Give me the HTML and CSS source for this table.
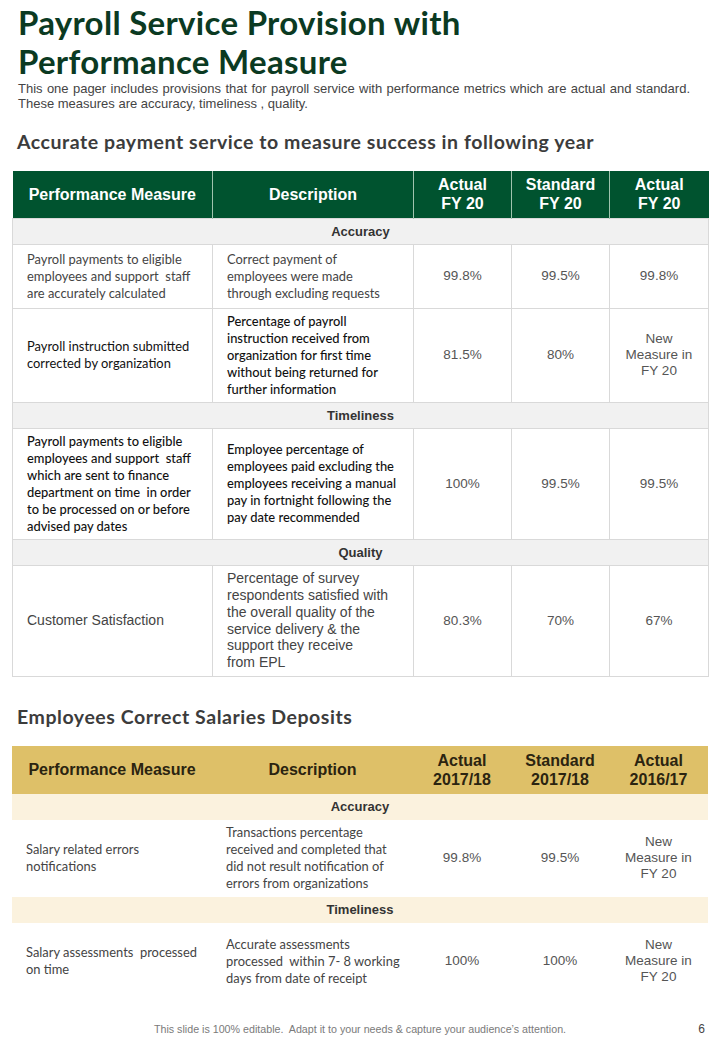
FILE: index.html
```html
<!DOCTYPE html>
<html>
<head>
<meta charset="utf-8">
<link rel="stylesheet" href="styles.css">
</head>
<body>
<div class="page">
  <h1 class="title">Payroll Service Provision with<br>Performance Measure</h1>
  <p class="intro"><span class="intro-l1">This one pager includes provisions that for payroll service with performance metrics which are actual and standard.</span><span class="intro-l2">These measures are accuracy, timeliness , quality.</span></p>

  <h2 class="heading h-first">Accurate payment service to measure success in following year</h2>
  <table class="grid green">
    <colgroup><col class="c1"><col class="c2"><col class="c3"><col class="c4"><col class="c5"></colgroup>
    <thead>
      <tr class="head"><th>Performance Measure</th><th>Description</th><th>Actual<br>FY 20</th><th>Standard<br>FY 20</th><th>Actual<br>FY 20</th></tr>
    </thead>
    <tbody>
      <tr class="section"><td colspan="5">Accuracy</td></tr>
      <tr class="r64"><td class="txt">Payroll payments to eligible employees and support&nbsp; staff are accurately calculated</td><td class="txt">Correct payment of<br>employees were made<br>through excluding requests</td><td class="num">99.8%</td><td class="num">99.5%</td><td class="num">99.8%</td></tr>
      <tr class="r94"><td class="txt dark">Payroll instruction submitted corrected by organization</td><td class="txt dark semi">Percentage of payroll instruction received from organization for first time without being returned for further information</td><td class="num">81.5%</td><td class="num">80%</td><td class="num">New<br>Measure in<br>FY 20</td></tr>
      <tr class="section"><td colspan="5">Timeliness</td></tr>
      <tr class="r111"><td class="txt dark semi">Payroll payments to eligible employees and support&nbsp; staff which are sent to finance department on time&nbsp; in order to be processed on or before advised pay dates</td><td class="txt dark semi">Employee percentage of employees paid excluding the employees receiving a manual pay in fortnight following the pay date recommended</td><td class="num">100%</td><td class="num">99.5%</td><td class="num">99.5%</td></tr>
      <tr class="section"><td colspan="5">Quality</td></tr>
      <tr class="r111"><td class="arial">Customer Satisfaction</td><td class="arial">Percentage of survey<br>respondents satisfied with<br>the overall quality of the<br>service delivery &amp; the<br>support they receive<br>from EPL</td><td class="num">80.3%</td><td class="num">70%</td><td class="num">67%</td></tr>
    </tbody>
  </table>

  <h2 class="heading h-second">Employees Correct Salaries Deposits</h2>
  <table class="grid gold">
    <colgroup><col class="c1"><col class="c2"><col class="c3"><col class="c4"><col class="c5"></colgroup>
    <thead>
      <tr class="head"><th>Performance Measure</th><th>Description</th><th>Actual<br>2017/18</th><th>Standard<br>2017/18</th><th>Actual<br>2016/17</th></tr>
    </thead>
    <tbody>
      <tr class="section"><td colspan="5">Accuracy</td></tr>
      <tr class="r77"><td class="txt">Salary related errors notifications</td><td class="txt">Transactions percentage<br>received and completed that<br>did not result notification of<br>errors from organizations</td><td class="num">99.8%</td><td class="num">99.5%</td><td class="num">New<br>Measure in<br>FY 20</td></tr>
      <tr class="section"><td colspan="5">Timeliness</td></tr>
      <tr class="r77"><td class="txt">Salary assessments&nbsp; processed on time</td><td class="txt">Accurate assessments<br>processed&nbsp; within 7- 8 working<br>days from date of receipt</td><td class="num">100%</td><td class="num">100%</td><td class="num">New<br>Measure in<br>FY 20</td></tr>
    </tbody>
  </table>

  <footer class="foot">
    <span class="note">This slide is 100% editable.&nbsp; Adapt it to your needs &amp; capture your audience’s attention.</span>
    <span class="pageno">6</span>
  </footer>
</div>
</body>
</html>
```

FILE: styles.css
```css
* { box-sizing: border-box; }
html, body { margin: 0; padding: 0; background: #fff; }
.page {
  width: 720px;
  height: 1040px;
  padding: 3px 12px 0 12px;
  position: relative;
  font-family: "Liberation Sans", Arial, sans-serif;
}
.title {
  margin: 0 0 0 6px;
  font-family: "Lato", "Open Sans", sans-serif;
  font-weight: 700;
  font-size: 33px;
  line-height: 39px;
  color: #0b3a22;
  letter-spacing: 0.3px;
}
.intro {
  margin: 1px 18px 0 6px;
  font-family: "Liberation Sans", Arial, sans-serif;
  font-size: 13px;
  line-height: 14.5px;
  color: #444;
}
.intro-l1 {
  display: block;
  text-align: justify;
  text-align-last: justify;
}
.intro-l2 { display: block; }
.heading {
  margin: 0 0 0 5px;
  font-family: "Lato", "Open Sans", sans-serif;
  font-weight: 700;
  font-size: 19.5px;
  line-height: 22px;
  color: #3c3c3c;
  letter-spacing: 0.55px;
}
.h-first { margin-top: 20px; margin-bottom: 18px; }
.h-second { margin-top: 29px; margin-bottom: 18px; }

.grid {
  width: 696px;
  border-collapse: collapse;
  table-layout: fixed;
}
.c1 { width: 200px; }
.c2 { width: 201px; }
.c3 { width: 98px; }
.c4 { width: 98px; }
.c5 { width: 99px; }

.grid th {
  font-family: "Liberation Sans", Arial, sans-serif;
  font-weight: 700;
  font-size: 16px;
  line-height: 19px;
  text-align: center;
  padding: 0 4px;
}
.green .head { height: 47px; background: #00532f; }
.green th { color: #fff; border-right: 1px solid #9fc4ae; }
.green th:last-child { border-right: none; }
.gold .head { height: 48px; background: #dec068; }
.gold th { color: #2b2410; }

.section td {
  height: 26px;
  padding: 0;
  text-align: center;
  font-family: "Liberation Sans", Arial, sans-serif;
  font-weight: 700;
  font-size: 13px;
  color: #333;
}
.green .section td { background: #f1f1f1; }
.gold .section td { background: #fbf2de; }

.green td { border: 1px solid #d9d9d9; }
.gold td { border: none; }

.r64 { height: 64px; }
.r94 { height: 94px; }
.r111 { height: 111px; }
.r77 { height: 77px; }

.txt {
  font-family: "Lato", "Open Sans", sans-serif;
  font-size: 12.9px;
  line-height: 17px;
  color: #444;
  padding: 0 12px 0 14px;
  vertical-align: middle;
}
.txt.dark { color: #111; }
.txt.semi { font-weight: 500; }
.arial {
  font-family: "Liberation Sans", Arial, sans-serif;
  font-size: 14px;
  line-height: 16.8px;
  color: #444;
  padding: 0 8px 0 14px;
}
.num {
  font-family: "Liberation Sans", Arial, sans-serif;
  font-size: 13.5px;
  line-height: 16px;
  color: #555;
  text-align: center;
  padding: 0 4px;
}

.foot {
  position: absolute;
  left: 0;
  right: 0;
  top: 1022px;
  height: 14px;
  display: flex;
  justify-content: center;
  align-items: center;
}
.note {
  font-family: "Liberation Sans", Arial, sans-serif;
  font-size: 10.7px;
  color: #7a7a7a;
}
.pageno {
  position: absolute;
  right: 15px;
  font-family: "Liberation Sans", Arial, sans-serif;
  font-size: 12px;
  color: #444;
}
```
